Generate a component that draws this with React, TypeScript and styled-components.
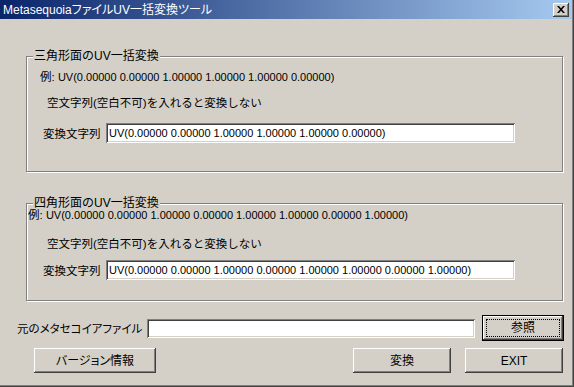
import React from "react";
import styled, { createGlobalStyle } from "styled-components";

const GlobalStyle = createGlobalStyle`
  html, body { margin: 0; padding: 0; background: #d4d0c8; }
  * { box-sizing: border-box; }
`;

const FONT = `"Liberation Sans", "Noto Sans CJK JP", sans-serif`;

const Window = styled.div`
  width: 574px;
  height: 387px;
  background: #d4d0c8;
  border-right: 1px solid #404040;
  border-bottom: 1px solid #404040;
  box-shadow: inset -1px -1px #808080;
  font-family: ${FONT};
  font-size: 11.5px;
  color: #000;
  display: flex;
  flex-direction: column;
  overflow: hidden;
`;

const TitleBar = styled.div`
  height: 19px;
  margin-right: 1px;
  flex: none;
  display: flex;
  align-items: center;
  justify-content: space-between;
  padding: 0 3px 0 3px;
  background: linear-gradient(to right, #0a246a, #a6caf0);
`;

const TitleText = styled.span`
  color: #fff;
  font-size: 12px;
  line-height: 14px;
  white-space: nowrap;
  font-feature-settings: "palt";
`;

const CloseButton = styled.div`
  width: 16px;
  height: 14px;
  background: #d4d0c8;
  box-shadow: inset -1px -1px #404040, inset 1px 1px #fff, inset -2px -2px #808080;
  display: flex;
  align-items: center;
  justify-content: center;
  padding-bottom: 1px;
`;

const Body = styled.div`
  display: flex;
  flex-direction: column;
  flex: 1;
`;

const Group = styled.div<{ $top: number; $height: number; $pad: number }>`
  position: relative;
  margin-top: ${(p) => p.$top}px;
  margin-left: 26px;
  width: 537px;
  height: ${(p) => p.$height}px;
  border: 1px solid #808080;
  box-shadow: inset 1px 1px #fff, 1px 1px #fff;
  padding-top: ${(p) => p.$pad}px;
  display: flex;
  flex-direction: column;
`;

const Legend = styled.span`
  position: absolute;
  top: -7px;
  left: 6px;
  padding: 0 1px;
  background: #d4d0c8;
  font-size: 12px;
  line-height: 12px;
  white-space: nowrap;
`;

const TextRow = styled.div<{ $left: number; $top?: number }>`
  margin-left: ${(p) => p.$left}px;
  margin-top: ${(p) => p.$top ?? 0}px;
  line-height: 12px;
  height: 12px;
  white-space: nowrap;
`;

const Coords = styled.span`
  font-size: 11px;
`;

const FieldRow = styled.div<{ $top: number }>`
  display: flex;
  align-items: center;
  margin-top: ${(p) => p.$top}px;
  margin-left: 16px;
  height: 20px;
`;

const FieldLabel = styled.span<{ $width: number }>`
  width: ${(p) => p.$width}px;
  flex: none;
  white-space: nowrap;
  font-feature-settings: "palt";
`;

const TextBox = styled.input<{ $width: number; $height: number }>`
  width: ${(p) => p.$width}px;
  height: ${(p) => p.$height}px;
  flex: none;
  border: none;
  outline: none;
  margin: 0;
  background: #fff;
  padding: 0 3px;
  font-family: ${FONT};
  font-size: 11px;
  color: #000;
  box-shadow: inset 1px 1px #808080, inset -1px -1px #fff, inset 2px 2px #404040,
    inset -2px -2px #d4d0c8;
`;

const FileRow = styled.div`
  display: flex;
  align-items: center;
  gap: 7px;
  margin-top: 14px;
  margin-left: 17px;
  height: 26px;
`;

const ButtonRow = styled.div`
  display: flex;
  align-items: center;
  gap: 14px;
  margin-top: 7px;
  margin-left: 34px;
  margin-right: 10px;
  height: 25px;
`;

const Button = styled.div<{ $width: number; $height: number; $default?: boolean }>`
  width: ${(p) => p.$width}px;
  height: ${(p) => p.$height}px;
  flex: none;
  display: flex;
  align-items: center;
  justify-content: center;
  background: #d4d0c8;
  font-size: 12px;
  line-height: 14px;
  white-space: nowrap;
  border: ${(p) => (p.$default ? "1px solid #000" : "none")};
  box-shadow: inset -1px -1px #404040, inset 1px 1px #fff, inset -2px -2px #808080,
    inset 2px 2px #d4d0c8;
  outline: ${(p) => (p.$default ? "1px dotted #000" : "none")};
  outline-offset: -5px;
  font-feature-settings: "palt";
`;

const Spacer = styled.div`
  flex: 1;
`;

export default function App() {
  return (
    <>
      <GlobalStyle />
      <Window>
        <TitleBar>
          <TitleText>MetasequoiaファイルUV一括変換ツール</TitleText>
          <CloseButton>
            <svg width="8" height="7" viewBox="0 0 8 7">
              <path d="M0 0 L2 0 L4 2.3 L6 0 L8 0 L5 3.5 L8 7 L6 7 L4 4.7 L2 7 L0 7 L3 3.5 Z" fill="#000" />
            </svg>
          </CloseButton>
        </TitleBar>
        <Body>
          <Group $top={37} $height={116} $pad={14}>
            <Legend>三角形面のUV一括変換</Legend>
            <TextRow $left={13}>
              例: <Coords>UV(0.00000 0.00000 1.00000 1.00000 1.00000 0.00000)</Coords>
            </TextRow>
            <TextRow $left={20} $top={14}>
              空文字列(空白不可)を入れると変換しない
            </TextRow>
            <FieldRow $top={14}>
              <FieldLabel $width={63}>変換文字列</FieldLabel>
              <TextBox
                $width={409}
                $height={20}
                readOnly
                defaultValue="UV(0.00000 0.00000 1.00000 1.00000 1.00000 0.00000)"
              />
            </FieldRow>
          </Group>
          <Group $top={31} $height={98} $pad={5}>
            <Legend>四角形面のUV一括変換</Legend>
            <TextRow $left={1}>
              例: <Coords>UV(0.00000 0.00000 1.00000 0.00000 1.00000 1.00000 0.00000 1.00000)</Coords>
            </TextRow>
            <TextRow $left={20} $top={17}>
              空文字列(空白不可)を入れると変換しない
            </TextRow>
            <FieldRow $top={10}>
              <FieldLabel $width={63}>変換文字列</FieldLabel>
              <TextBox
                $width={409}
                $height={20}
                readOnly
                defaultValue="UV(0.00000 0.00000 1.00000 0.00000 1.00000 1.00000 0.00000 1.00000)"
              />
            </FieldRow>
          </Group>
          <FileRow>
            <FieldLabel $width={123}>元のメタセコイアファイル</FieldLabel>
            <TextBox $width={328} $height={19} readOnly defaultValue="" />
            <Button $width={82} $height={26} $default>
              参照
            </Button>
          </FileRow>
          <ButtonRow>
            <Button $width={122} $height={25}>
              バージョン情報
            </Button>
            <Spacer />
            <Button $width={98} $height={25}>
              変換
            </Button>
            <Button $width={98} $height={25}>
              EXIT
            </Button>
          </ButtonRow>
        </Body>
      </Window>
    </>
  );
}
